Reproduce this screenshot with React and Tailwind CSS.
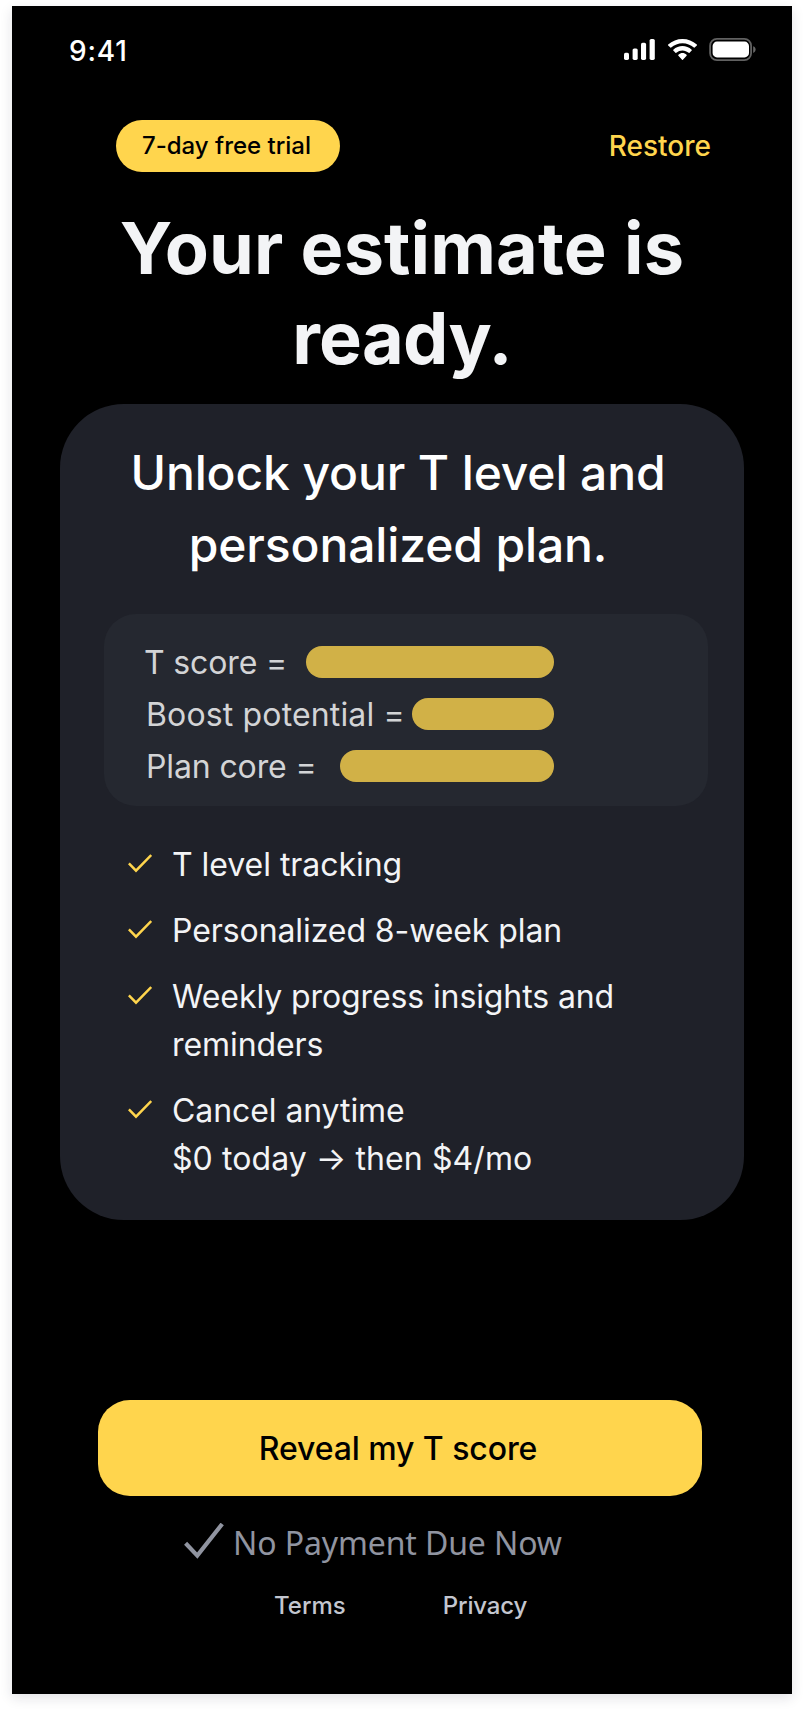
function StatusBar() {
  return (
    <div className="flex h-[90px] items-center justify-between pl-[57px] pr-9">
      <span className="-mt-px text-[28px] font-medium leading-none tracking-[0.8px] text-white">9:41</span>
      <div className="-mt-[3px] flex items-center">
        <svg width="31" height="21" viewBox="0 0 31 21" fill="#fff">
          <rect x="0" y="13.7" width="5" height="7.2" rx="1.6" />
          <rect x="8.6" y="9.4" width="5.1" height="11.5" rx="1.6" />
          <rect x="17" y="3.8" width="5.1" height="17.1" rx="1.6" />
          <rect x="25.6" y="0" width="5.2" height="20.9" rx="1.6" />
        </svg>
        <svg className="ml-[13px]" width="29" height="21" viewBox="0 0 17.142 12.328" preserveAspectRatio="none" fill="#fff">
          <path d="M8.571 2.466c2.487 0 4.879.922 6.682 2.576.136.128.353.126.486-.004l1.298-1.263a.34.34 0 0 0-.003-.494c-4.731-4.375-12.195-4.375-16.926 0a.34.34 0 0 0-.003.494l1.298 1.263c.133.13.35.132.486.004 1.803-1.654 4.195-2.576 6.682-2.576Z" />
          <path d="M8.568 6.687c1.357 0 2.666.511 3.672 1.435.136.131.351.129.483-.006l1.288-1.319a.366.366 0 0 0-.006-.519c-3.063-2.891-7.808-2.891-10.872 0a.366.366 0 0 0-.005.519l1.287 1.319c.133.135.347.137.483.006a5.43 5.43 0 0 1 3.67-1.435Z" />
          <path d="M11.092 9.48a.393.393 0 0 1-.102.281l-2.177 2.455a.323.323 0 0 1-.483 0L6.153 9.761a.393.393 0 0 1 .011-.557c1.39-1.315 3.426-1.315 4.816 0a.4.4 0 0 1 .112.276Z" />
        </svg>
        <svg className="ml-3" width="47" height="23" viewBox="0 0 47 23">
          <rect x="1.1" y="0.9" width="41" height="21.2" rx="6.8" fill="none" stroke="#fff" strokeOpacity="0.38" strokeWidth="1.8" />
          <rect x="3.6" y="3.6" width="36.4" height="15.8" rx="4.4" fill="#fff" />
          <path d="M44.2 8.3c1.6.6 2.4 1.8 2.4 3.3s-.8 2.7-2.4 3.3z" fill="#fff" fillOpacity="0.4" />
        </svg>
      </div>
    </div>
  );
}

const scores = [
  { label: "T score =", text: "tracking-[-0.15px]", bar: "w-[248px]" },
  { label: "Boost potential =", text: "ml-[2px] tracking-[0.15px]", bar: "w-[142px]" },
  { label: "Plan core =", text: "ml-[2px] tracking-[-0.12px]", bar: "w-[214px]" },
];

const features = [
  [{ text: "T level tracking", tracking: "tracking-[-0.04px]" }],
  [{ text: "Personalized 8-week plan", tracking: "tracking-[-0.08px]" }],
  [
    { text: "Weekly progress insights and", tracking: "tracking-[-0.1px]" },
    { text: "reminders", tracking: "tracking-[-0.08px]" },
  ],
  [
    { text: "Cancel anytime", tracking: "tracking-[-0.08px]" },
    { text: "$0 today → then $4/mo", tracking: "tracking-[0.08px]" },
  ],
];

function PlanCard() {
  return (
    <section className="mx-12 mt-[21px] h-[816px] rounded-[64px] bg-[#1f2129] px-11 pt-[33px]">
      <h2 className="-translate-x-1 text-center text-[48px] font-medium leading-[72px] tracking-[-0.12px] text-white">
        Unlock your T level and
        <br />
        personalized plan.
      </h2>
      <div className="-mr-2 mt-[33px] h-48 rounded-[32px] bg-[#252830] pl-10 pt-[22px]">
        {scores.map((s) => (
          <div key={s.label} className="flex h-[52px] w-[410px] items-center justify-between">
            <span className={`mt-0.5 whitespace-nowrap text-[32px] leading-[48px] text-[#d3d4d6] ${s.text}`}>{s.label}</span>
            <span className={`h-8 shrink-0 rounded-full bg-[#d1b147] ${s.bar}`} />
          </div>
        ))}
      </div>
      <ul className="mt-[35px] flex flex-col gap-[18px] pl-6">
        {features.map((lines) => (
          <li key={lines[0].text} className="flex gap-5">
            <svg className="mt-3 shrink-0" width="24" height="20" viewBox="0 0 24 20" fill="none" stroke="#ffd54d" strokeWidth="2.5">
              <path d="M0.9 10.4 8 17.6 23.2 2" />
            </svg>
            <span className="whitespace-nowrap text-[32px] leading-[48px] text-[#f3f4f6]">
              {lines.map((l) => (
                <span key={l.text} className={`block ${l.tracking}`}>{l.text}</span>
              ))}
            </span>
          </li>
        ))}
      </ul>
    </section>
  );
}

export default function App() {
  return (
    <div className="h-[1712px] bg-white px-3 pt-1.5 font-['Inter',sans-serif]">
      <main className="flex h-[1688px] w-[780px] flex-col bg-black shadow-[0_4px_12px_rgba(25,25,50,0.12)]">
        <StatusBar />
        <div className="mt-6 flex h-[52px] items-center justify-between pl-[104px] pr-[81px]">
          <span className="flex h-[52px] w-56 items-center justify-center rounded-full bg-[#ffd54d] pb-px pr-[3px] text-[24px] font-medium leading-none text-black">
            7-day free trial
          </span>
          <a className="text-[28px] font-medium leading-none text-[#ffd54d]">Restore</a>
        </div>
        <h1 className="mt-[31px] text-center text-[72px] font-bold leading-[90px] text-[#f3f4f6]">
          <span className="block tracking-[0.14px]">Your estimate is</span>
          <span className="block tracking-[-0.7px]">ready.</span>
        </h1>
        <PlanCard />
        <button className="ml-[86px] mt-[180px] h-24 w-[604px] shrink-0 rounded-[32px] bg-[#ffd54d] pr-1 pt-0.5 text-[32px] font-medium tracking-[-0.08px] text-black">
          Reveal my T score
        </button>
        <div className="mt-[22px] flex h-12 items-center pl-[172px] text-[#9094a0]">
          <svg width="40" height="38" viewBox="0 0 40 38" fill="none" stroke="currentColor" strokeWidth="4.2">
            <path d="M1.6 20.2 13.3 32.6 38.2 1" />
          </svg>
          <span className="ml-[9px] mt-px font-['Noto_Sans',sans-serif] text-[32px] leading-[48px] tracking-[-0.12px]">No Payment Due Now</span>
        </div>
        <nav className="mt-[22px] flex h-9 items-center gap-[97px] pl-[262px] text-[24px] font-medium text-[#c3c6cf]">
          <a>Terms</a>
          <a className="tracking-[-0.15px]">Privacy</a>
        </nav>
      </main>
    </div>
  );
}
